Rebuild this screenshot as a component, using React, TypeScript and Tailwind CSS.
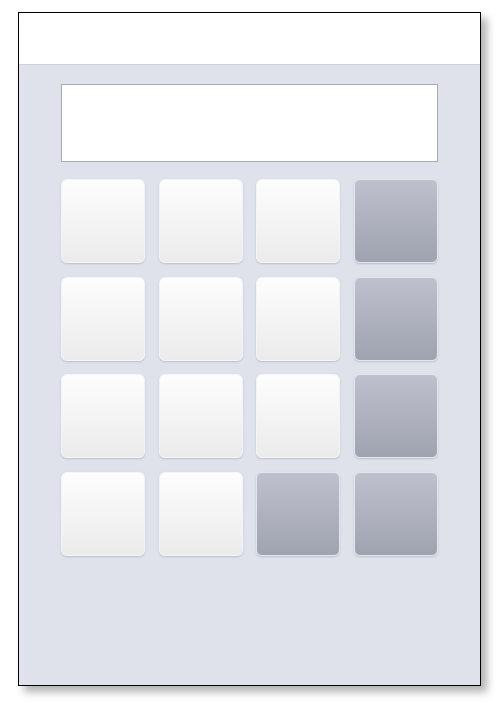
const keys = [
  "light", "light", "light", "dark",
  "light", "light", "light", "dark",
  "light", "light", "light", "dark",
  "light", "light", "dark", "dark",
];

function Key({ tone }: { tone: string }) {
  if (tone === "dark") {
    return (
      <button className="h-[84px] w-[84px] rounded-[6px] border border-[#e4e6ee] bg-gradient-to-b from-[#bec1cd] to-[#9fa2af] shadow-[0_1px_2px_rgba(120,125,145,0.35)]" />
    );
  }
  return (
    <button className="h-[84px] w-[84px] rounded-[6px] border border-[#f4f5f8] bg-gradient-to-b from-[#fdfdfd] to-[#ebebeb] shadow-[0_1px_2px_rgba(120,125,145,0.35)]" />
  );
}

export default function App() {
  return (
    <div className="h-[708px] w-[502px] bg-white pl-[18px] pt-[12px]">
      <div className="flex h-[674px] w-[463px] flex-col border border-black bg-[#dfe2ea] shadow-[6px_6px_8px_rgba(0,0,0,0.3)]">
        <div className="h-[52px] shrink-0 border-b border-[#cdd1db] bg-white" />
        <div className="flex flex-col px-[42px] pt-[19px]">
          <div className="h-[78px] w-[377px] border border-[#a9abb0] bg-white" />
          <div className="mt-[17px] grid w-[377px] grid-cols-[repeat(4,84px)] justify-between gap-y-[13.67px]">
            {keys.map((k, i) => (
              <Key key={i} tone={k} />
            ))}
          </div>
        </div>
      </div>
    </div>
  );
}
